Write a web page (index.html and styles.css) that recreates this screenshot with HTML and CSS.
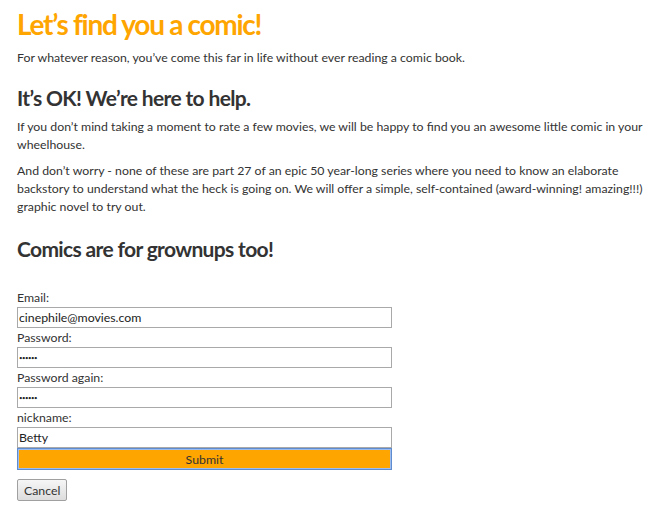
FILE: index.html
```html
<!DOCTYPE html>
<html>
<head>
<meta charset="utf-8">
<link rel="stylesheet" href="styles.css">
</head>
<body>
<div class="page">
  <h1 class="title">Let’s find you a comic!</h1>
  <p class="text">For whatever reason, you’ve come this far in life without ever reading a comic book.</p>
  <h2 class="subtitle">It’s OK! We’re here to help.</h2>
  <p class="text">If you don’t mind taking a moment to rate a few movies, we will be happy to find you an awesome little comic in your wheelhouse.</p>
  <p class="text">And don’t worry - none of these are part 27 of an epic 50 year-long series where you need to know an elaborate backstory to understand what the heck is going on. We will offer a simple, self-contained (award-winning! amazing!!!) graphic novel to try out.</p>
  <h2 class="subtitle subtitle-form">Comics are for grownups too!</h2>
  <form class="signup">
    <label class="label">Email:</label>
    <input class="field" type="text" value="cinephile@movies.com">
    <label class="label">Password:</label>
    <input class="field field-secret" type="password" value="secret">
    <label class="label">Password again:</label>
    <input class="field field-secret" type="password" value="secret">
    <label class="label">nickname:</label>
    <input class="field" type="text" value="Betty">
    <button class="submit" type="button">Submit</button>
  </form>
  <button class="cancel" type="button">Cancel</button>
</div>
</body>
</html>
```
FILE: styles.css
```css
html, body {
  margin: 0;
  padding: 0;
  background: #fff;
}
.page {
  padding: 6px 10px 17px 17px;
  font-family: "Lato", "Open Sans", sans-serif;
  font-size: 12.3px;
  color: #333;
}
.title {
  margin: 0 0 7px 0;
  font-size: 28px;
  line-height: 36px;
  font-weight: 700;
  color: #ffa500;
  letter-spacing: -1.3px;
}
.text {
  margin: 0 0 8px 0;
  line-height: 18px;
}
.subtitle {
  margin: 17px 0 6px 0;
  font-size: 21px;
  line-height: 28px;
  font-weight: 700;
  color: #333;
  letter-spacing: -0.65px;
}
.subtitle-form {
  margin-top: 19px;
  margin-bottom: 25px;
}
.signup {
  display: flex;
  flex-direction: column;
  align-items: flex-start;
  width: 375px;
}
.label {
  line-height: 19px;
}
.field {
  box-sizing: border-box;
  width: 375px;
  height: 21px;
  margin: 0;
  padding: 0 1px;
  border: 1px solid #a9a9a9;
  font-family: "Lato", "Open Sans", sans-serif;
  font-size: 12.3px;
  color: #222;
  background: #fff;
}
.field-secret {
  font-size: 6px;
  letter-spacing: -0.5px;
}
.submit {
  box-sizing: border-box;
  width: 375px;
  height: 22px;
  margin: 0;
  border: 1px solid #5f8ccf;
  box-shadow: inset 0 0 0 1px #9dbdf0;
  background: #ffa500;
  font-family: "Lato", "Open Sans", sans-serif;
  font-size: 12.3px;
  color: #333;
}
.cancel {
  box-sizing: border-box;
  margin-top: 9px;
  height: 22px;
  padding: 0 6px;
  border: 1px solid #a0a0a0;
  border-radius: 2px;
  background: linear-gradient(#f6f6f6, #dddddd);
  font-family: "Lato", "Open Sans", sans-serif;
  font-size: 12.3px;
  color: #333;
}
```
